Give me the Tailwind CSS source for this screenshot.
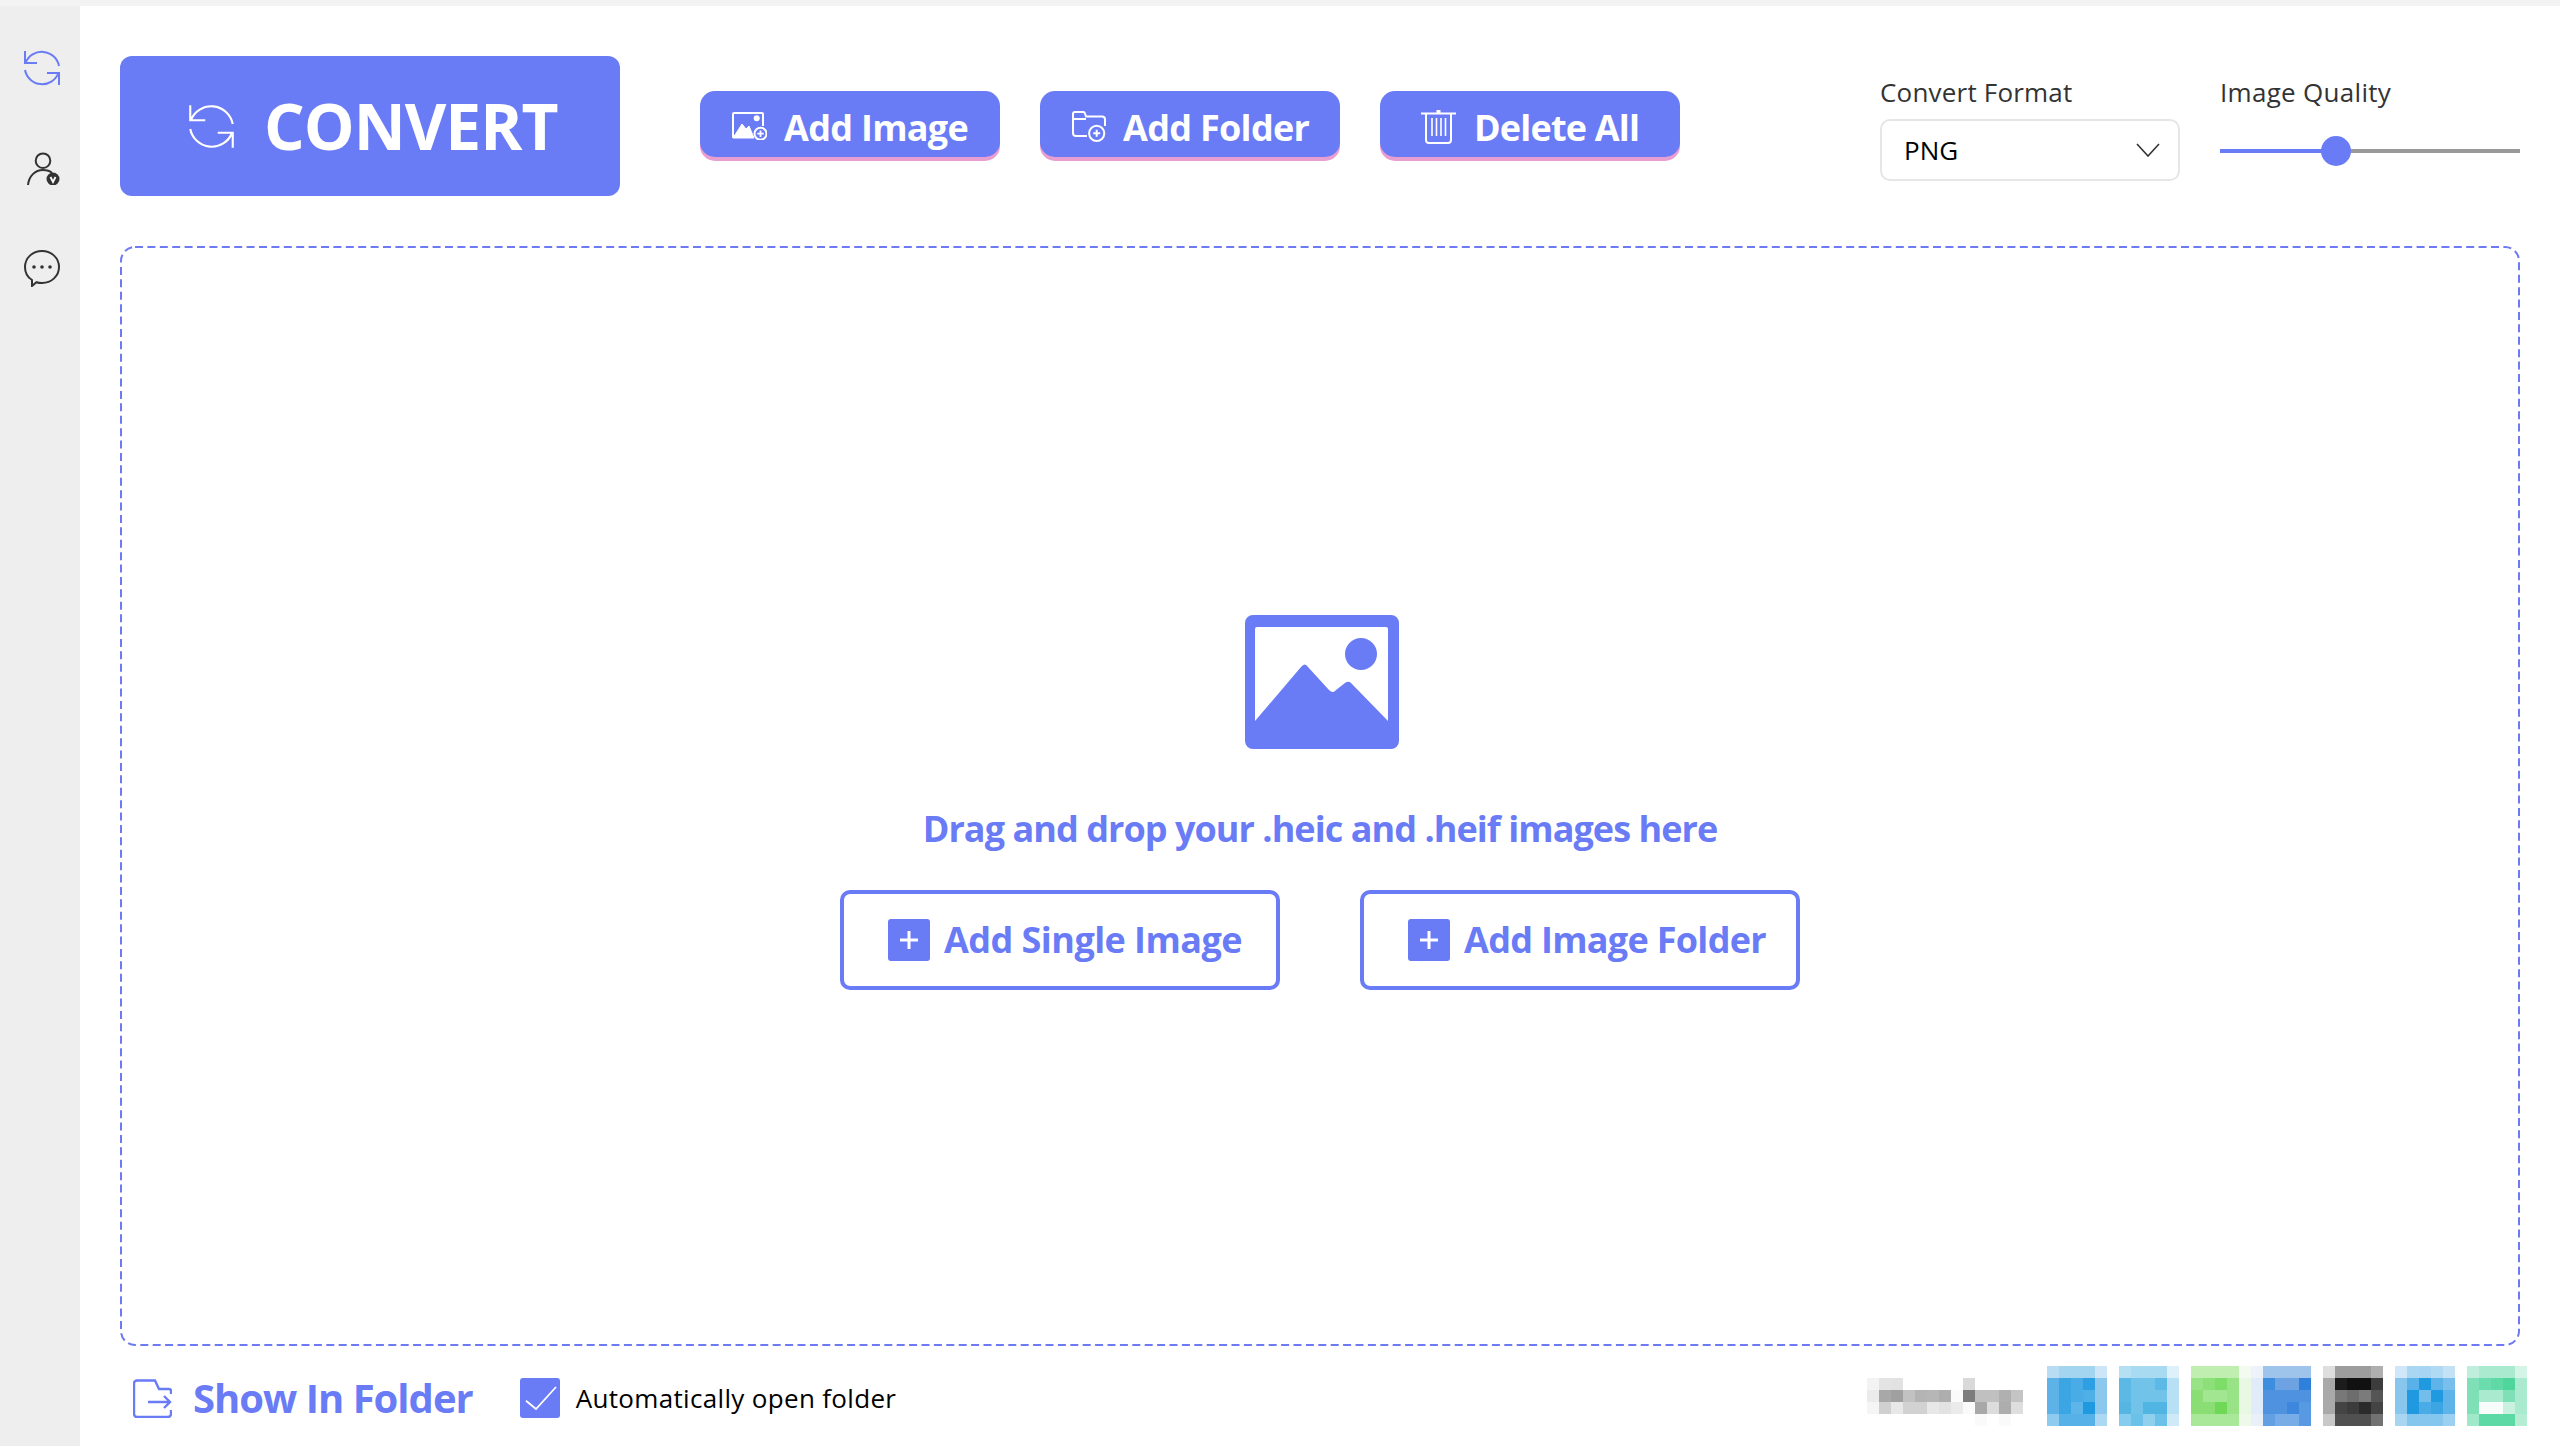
<!DOCTYPE html>
<html lang="en">
<head>
<meta charset="utf-8">
<title>HEIC Converter</title>
<script src="https://cdn.jsdelivr.net/npm/@tailwindcss/browser@4"></script>
</head>
<body class="bg-white font-['Open_Sans','Noto_Sans',sans-serif] text-[#333]">
<div class="flex h-[1446px] w-[2560px] flex-col overflow-hidden">
  <div class="h-[6px] shrink-0 bg-[#f3f3f3]"></div>
  <div class="flex min-h-0 flex-1">
    <!-- sidebar -->
    <aside class="flex w-[80px] shrink-0 flex-col items-center bg-[#eeeeee] pt-[44px]">
      <svg class="ml-[4px] h-[36px] w-[36px]" viewBox="0 0 36 36" fill="none" stroke="#6a7bf6" stroke-width="2"><path d="M1 1V13H13M1.5 13A17.5 17.5 0 0 1 35 16M35 35V23H23M34.5 23A17.5 17.5 0 0 1 1 20"/></svg>
      <svg class="ml-[7px] mt-[66px] h-[33px] w-[33px]" viewBox="0 0 33 33" fill="none" stroke="#333" stroke-width="2"><circle cx="16" cy="8.7" r="7.3"/><path d="M1 33C2 24 8 18 16 18C20 18 23 19 25 21"/><circle cx="26" cy="27" r="6.5" fill="#333" stroke="none"/><path d="M23.5 25L26 30L28.5 25" stroke="#fff" stroke-width="1.8"/></svg>
      <svg class="ml-[3px] mt-[65px] h-[37px] w-[38px]" viewBox="0 0 38 37" fill="none" stroke="#333" stroke-width="2"><path d="M19 1C28.5 1 36 8 36 17C36 26 28.5 33 19 33C17 33 15 32.7 13.5 32.2L9 36L9 30C4 27 2 22 2 17C2 8 9.5 1 19 1Z"/><circle cx="11" cy="17" r="1.8" fill="#333" stroke="none"/><circle cx="19" cy="17" r="1.8" fill="#333" stroke="none"/><circle cx="27" cy="17" r="1.8" fill="#333" stroke="none"/></svg>
    </aside>

    <main class="flex min-w-0 flex-1 flex-col px-[40px] pt-[50px]">
      <!-- header -->
      <div class="flex h-[140px] shrink-0 items-center">
        <button class="flex h-[140px] w-[500px] items-center rounded-[12px] bg-[#6a7bf6] pl-[69px] text-white">
          <svg class="h-[45px] w-[45px]" viewBox="0 0 36 36" fill="none" stroke="#fff" stroke-width="1.7"><path d="M1 1V13H13M1.5 13A17.5 17.5 0 0 1 35 16M35 35V23H23M34.5 23A17.5 17.5 0 0 1 1 20"/></svg>
          <span class="ml-[30px] text-[64px] leading-none font-bold tracking-[-1px]">CONVERT</span>
        </button>
        <div class="ml-[80px] -mt-[4px] flex gap-[40px]">
          <button class="flex h-[66px] w-[300px] items-center rounded-[15px] bg-[#6a7bf6] pl-[32px] pt-[4px] text-white shadow-[0_4px_0_#e89ed0]">
            <svg class="h-[28px] w-[35px]" viewBox="0 0 35 28" fill="none"><path d="M1 26V2a1 1 0 0 1 1-1H30a1 1 0 0 1 1 1V14" stroke="#fff" stroke-width="2"/><path d="M1 26L10 12L14 17L17 14L22 26Z" fill="#fff" stroke="#fff" stroke-width="1"/><circle cx="24.7" cy="6.3" r="3" fill="#fff"/><circle cx="28.5" cy="21.7" r="6" fill="#6a7bf6" stroke="#fff" stroke-width="2"/><path d="M28.5 18.5V25M25.3 21.7H31.7" stroke="#fff" stroke-width="1.8"/></svg>
            <span class="ml-[17px] pt-[4px] text-[36px] leading-none font-bold tracking-[-0.7px]">Add Image</span>
          </button>
          <button class="flex h-[66px] w-[300px] items-center rounded-[15px] bg-[#6a7bf6] pl-[32px] pt-[4px] text-white shadow-[0_4px_0_#e89ed0]">
            <svg class="h-[31px] w-[35px]" viewBox="0 0 35 31" fill="none" stroke="#fff" stroke-width="2"><path d="M15 25H4a3 3 0 0 1-3-3V3a2 2 0 0 1 2-2H11a2 2 0 0 1 2 1.5L14 5.5H30a3 3 0 0 1 3 3V15"/><path d="M1 8H14"/><circle cx="24.7" cy="22.3" r="7.6"/><path d="M24.7 18.8V25.8M21.2 22.3H28.2"/></svg>
            <span class="ml-[16px] pt-[4px] text-[36px] leading-none font-bold tracking-[-0.7px]">Add Folder</span>
          </button>
          <button class="flex h-[66px] w-[300px] items-center rounded-[15px] bg-[#6a7bf6] pl-[41px] pt-[4px] text-white shadow-[0_4px_0_#e89ed0]">
            <svg class="h-[35px] w-[35px]" viewBox="0 0 35 35" fill="none" stroke="#fff" stroke-width="2"><path d="M0 4.5H35" stroke-width="2"/><path d="M15.5 2.5H19.500" stroke-width="3"/><path d="M5 5V31a3 3 0 0 0 3 3H27a3 3 0 0 0 3-3V5"/><path d="M11 9V27M15.500 9V27M20 9V27M24.500 9V27" stroke-width="1.6"/></svg>
            <span class="ml-[18px] pt-[4px] text-[36px] leading-none font-bold tracking-[-0.8px]">Delete All</span>
          </button>
        </div>
        <div class="ml-auto flex gap-[40px] self-start pt-[18px]">
          <div class="w-[300px]">
            <div class="h-[36px] text-[26px] leading-[36px] tracking-[0.2px] text-[#333]">Convert Format</div>
            <div class="mt-[9px] flex h-[62px] items-center justify-between rounded-[10px] border-2 border-[#e6e6e6] pl-[22px] pr-[18px] text-[26px] text-black">
              <span>PNG</span>
              <svg class="h-[14px] w-[24px]" viewBox="0 0 24 14" fill="none" stroke="#333" stroke-width="1.6"><path d="M1 1L12 13L23 1"/></svg>
            </div>
          </div>
          <div class="w-[300px]">
            <div class="h-[36px] text-[26px] leading-[36px] tracking-[0.3px] text-[#333]">Image Quality</div>
            <div class="relative mt-[39px] flex h-[4px]">
              <div class="w-[116px] bg-[#6a7bf6]"></div>
              <div class="flex-1 bg-[#999999]"></div>
              <div class="absolute left-[101px] top-[-13px] size-[30px] rounded-full bg-[#6a7bf6]"></div>
            </div>
          </div>
        </div>
      </div>

      <!-- drop zone -->
      <section class="relative mt-[50px] flex h-[1100px] shrink-0 flex-col items-center pt-[369px]">
        <svg class="absolute inset-0 h-[1100px] w-[2400px]" viewBox="0 0 2400 1100" fill="none"><rect x="1" y="1" width="2398" height="1098" rx="14" stroke="#6e7af2" stroke-width="2" stroke-dasharray="8 4.4"/></svg>
        <svg class="h-[134px] w-[154px] translate-x-[2px] shrink-0" viewBox="0 0 154 134"><path fill="#6a7bf6" fill-rule="evenodd" d="M8 0H146a8 8 0 0 1 8 8V126a8 8 0 0 1-8 8H8a8 8 0 0 1-8-8V8a8 8 0 0 1 8-8ZM12 12a2 2 0 0 0-2 2V106L56 52Q60 47 63 52L84 75Q88 79 91 75L100 68Q104 65 107 69L143 106V14a2 2 0 0 0-2-2Z"/><circle cx="116" cy="39" r="16" fill="#6a7bf6"/></svg>
        <h2 class="mt-[56px] text-[36px] leading-[48px] font-bold tracking-[-0.95px] text-[#6a7bf6]">Drag and drop your .heic and .heif images here</h2>
        <div class="mt-[37px] flex gap-[80px]">
          <button class="flex h-[100px] w-[440px] items-center rounded-[10px] border-4 border-[#6a7bf6] pl-[44px] text-[#6a7bf6]">
            <span class="flex size-[42px] shrink-0 items-center justify-center rounded-[3px] bg-[#6a7bf6]"><svg class="size-[24px]" viewBox="0 0 24 24" stroke="#fff" stroke-width="3"><path d="M12 3V21M3 12H21"/></svg></span>
            <span class="ml-[14px] text-[36px] leading-none font-bold tracking-[-0.55px]">Add Single Image</span>
          </button>
          <button class="flex h-[100px] w-[440px] items-center rounded-[10px] border-4 border-[#6a7bf6] pl-[44px] text-[#6a7bf6]">
            <span class="flex size-[42px] shrink-0 items-center justify-center rounded-[3px] bg-[#6a7bf6]"><svg class="size-[24px]" viewBox="0 0 24 24" stroke="#fff" stroke-width="3"><path d="M12 3V21M3 12H21"/></svg></span>
            <span class="ml-[14px] text-[36px] leading-none font-bold tracking-[-0.7px]">Add Image Folder</span>
          </button>
        </div>
      </section>

      <!-- footer -->
      <footer class="flex h-[100px] shrink-0 items-center">
        <div class="ml-[13px] mt-[4px] flex items-center">
          <svg class="h-[39px] w-[39px]" viewBox="0 0 39 39" fill="none" stroke="#6a7bf6" stroke-width="2.4"><path d="M38 15V12a2 2 0 0 0-2-2H26L22 1.500H4a3 3 0 0 0-3 3V35a3 3 0 0 0 3 3H35a3 3 0 0 0 3-3V31M15 23H37M31 17L37 23L31 29"/></svg>
          <span class="ml-[21px] text-[40px] leading-none font-bold tracking-[-1px] text-[#6a7bf6]">Show In Folder</span>
          <span class="ml-[47px] flex size-[40px] items-center justify-center rounded-[3px] bg-[#6a7bf6]"><svg class="size-[40px]" viewBox="0 0 40 40" fill="none" stroke="#fff" stroke-width="1.8"><path d="M6 22.700L16 31L36 9"/></svg></span>
          <span class="ml-[16px] text-[26px] leading-none tracking-[0.33px] text-black">Automatically open folder</span>
        </div>
        <div class="-mr-[7px] ml-auto flex items-end gap-[12px]">
          <div class="mr-[12px] grid h-[48px] w-[156px] grid-cols-13 grid-rows-4 blur-[0.6px]">
            <i class="bg-[#f3f3f3]"></i><i class="bg-[#e4e4e4]"></i><i class="bg-[#e2e2e2]"></i><i></i><i></i><i></i><i></i><i></i><i class="bg-[#d9d9d9]"></i><i></i><i></i><i></i><i></i>
            <i class="bg-[#ebebeb]"></i><i class="bg-[#a8a8a8]"></i><i class="bg-[#a0a0a0]"></i><i class="bg-[#c2c2c2]"></i><i class="bg-[#b4b4b4]"></i><i class="bg-[#b6b6b6]"></i><i class="bg-[#aeaeae]"></i><i class="bg-[#fafafa]"></i><i class="bg-[#7d7d7d]"></i><i class="bg-[#c0c0c0]"></i><i class="bg-[#c0c0c0]"></i><i class="bg-[#b0b0b0]"></i><i class="bg-[#c4c4c4]"></i>
            <i class="bg-[#f5f5f5]"></i><i class="bg-[#d0d0d0]"></i><i class="bg-[#e8e8e8]"></i><i class="bg-[#d2d2d2]"></i><i class="bg-[#d2d2d2]"></i><i class="bg-[#e8e8e8]"></i><i class="bg-[#e2e2e2]"></i><i class="bg-[#ebebeb]"></i><i class="bg-[#fafafa]"></i><i class="bg-[#a8a8a8]"></i><i class="bg-[#dcdcdc]"></i><i class="bg-[#adadad]"></i><i class="bg-[#dedede]"></i>
            <i></i><i></i><i></i><i></i><i></i><i></i><i></i><i></i><i></i><i class="bg-[#fafafa]"></i><i></i><i class="bg-[#fafafa]"></i><i></i>
          </div>
          <div class="grid size-[60px] grid-cols-5 grid-rows-5 blur-[0.6px]">
            <i class="bg-[#b8dcf3]"></i><i class="bg-[#a3d5f1]"></i><i class="bg-[#a3d5f1]"></i><i class="bg-[#a3d5f1]"></i><i class="bg-[#cde6f7]"></i>
            <i class="bg-[#5db3e8]"></i><i class="bg-[#3ca5e4]"></i><i class="bg-[#4aace6]"></i><i class="bg-[#2d9fe2]"></i><i class="bg-[#8cc8ee]"></i>
            <i class="bg-[#5db3e8]"></i><i class="bg-[#3ca5e4]"></i><i class="bg-[#4aace6]"></i><i class="bg-[#4fb0e7]"></i><i class="bg-[#8cc8ee]"></i>
            <i class="bg-[#5db3e8]"></i><i class="bg-[#3ca5e4]"></i><i class="bg-[#5eb5e9]"></i><i class="bg-[#1f99e0]"></i><i class="bg-[#8cc8ee]"></i>
            <i class="bg-[#8fcaef]"></i><i class="bg-[#55b1e8]"></i><i class="bg-[#55b1e8]"></i><i class="bg-[#55b1e8]"></i><i class="bg-[#acd8f3]"></i>
          </div>
          <div class="grid size-[60px] grid-cols-5 grid-rows-5 blur-[0.6px]">
            <i class="bg-[#b5dff3]"></i><i class="bg-[#a8daf2]"></i><i class="bg-[#a8daf2]"></i><i class="bg-[#a8daf2]"></i><i class="bg-[#def0fa]"></i>
            <i class="bg-[#5cb8e4]"></i><i class="bg-[#72c3ea]"></i><i class="bg-[#72c3ea]"></i><i class="bg-[#5cb8e4]"></i><i class="bg-[#b8e0f4]"></i>
            <i class="bg-[#5cb8e4]"></i><i class="bg-[#72c3ea]"></i><i class="bg-[#72c3ea]"></i><i class="bg-[#72c3ea]"></i><i class="bg-[#b8e0f4]"></i>
            <i class="bg-[#55b5e3]"></i><i class="bg-[#72c3ea]"></i><i class="bg-[#50b5e3]"></i><i class="bg-[#50b5e3]"></i><i class="bg-[#b8e0f4]"></i>
            <i class="bg-[#85ccee]"></i><i class="bg-[#6cc1e9]"></i><i class="bg-[#90d0ef]"></i><i class="bg-[#6cc1e9]"></i><i class="bg-[#cfe9f7]"></i>
          </div>
          <div class="grid h-[60px] w-[120px] grid-cols-10 grid-rows-5 blur-[0.6px]">
            <i class="bg-[#c0edb0]"></i><i class="bg-[#c0edb0]"></i><i class="bg-[#c0edb0]"></i><i class="bg-[#c0edb0]"></i><i class="bg-[#f3fbf0]"></i><i class="bg-[#edf3fb]"></i><i class="bg-[#9fc4ec]"></i><i class="bg-[#9fc4ec]"></i><i class="bg-[#9fc4ec]"></i><i class="bg-[#9fc4ec]"></i>
            <i class="bg-[#98e385]"></i><i class="bg-[#8de078]"></i><i class="bg-[#7edc68]"></i><i class="bg-[#98e385]"></i><i class="bg-[#e8f8e3]"></i><i class="bg-[#e0ecf9]"></i><i class="bg-[#3d8ede]"></i><i class="bg-[#6da3e2]"></i><i class="bg-[#6da3e2]"></i><i class="bg-[#2f80da]"></i>
            <i class="bg-[#8ade74]"></i><i class="bg-[#a3e692]"></i><i class="bg-[#a3e692]"></i><i class="bg-[#98e385]"></i><i class="bg-[#e8f8e3]"></i><i class="bg-[#e0ecf9]"></i><i class="bg-[#4f93e0]"></i><i class="bg-[#4f93e0]"></i><i class="bg-[#4f93e0]"></i><i class="bg-[#4f93e0]"></i>
            <i class="bg-[#8ade74]"></i><i class="bg-[#8ade74]"></i><i class="bg-[#6fd857]"></i><i class="bg-[#98e385]"></i><i class="bg-[#e8f8e3]"></i><i class="bg-[#e0ecf9]"></i><i class="bg-[#4f93e0]"></i><i class="bg-[#4f93e0]"></i><i class="bg-[#3d88dd]"></i><i class="bg-[#569ae1]"></i>
            <i class="bg-[#aae899]"></i><i class="bg-[#aae899]"></i><i class="bg-[#aae899]"></i><i class="bg-[#aae899]"></i><i class="bg-[#eef9ea]"></i><i class="bg-[#e8f0fa]"></i><i class="bg-[#629fe3]"></i><i class="bg-[#78ace7]"></i><i class="bg-[#78ace7]"></i><i class="bg-[#5998e2]"></i>
          </div>
          <div class="grid size-[60px] grid-cols-5 grid-rows-5 blur-[0.6px]">
            <i class="bg-[#dedede]"></i><i class="bg-[#9d9d9d]"></i><i class="bg-[#9d9d9d]"></i><i class="bg-[#9d9d9d]"></i><i class="bg-[#afafaf]"></i>
            <i class="bg-[#a9a9a9]"></i><i class="bg-[#1c1c1c]"></i><i class="bg-[#111111]"></i><i class="bg-[#111111]"></i><i class="bg-[#3c3c3c]"></i>
            <i class="bg-[#a9a9a9]"></i><i class="bg-[#787878]"></i><i class="bg-[#6d6d6d]"></i><i class="bg-[#7b7b7b]"></i><i class="bg-[#555555]"></i>
            <i class="bg-[#a9a9a9]"></i><i class="bg-[#444444]"></i><i class="bg-[#3c3c3c]"></i><i class="bg-[#2b2b2b]"></i><i class="bg-[#444444]"></i>
            <i class="bg-[#c8c8c8]"></i><i class="bg-[#505050]"></i><i class="bg-[#505050]"></i><i class="bg-[#505050]"></i><i class="bg-[#727272]"></i>
          </div>
          <div class="grid size-[60px] grid-cols-5 grid-rows-5 blur-[0.6px]">
            <i class="bg-[#cfe7f8]"></i><i class="bg-[#a9d7f3]"></i><i class="bg-[#a5d5f2]"></i><i class="bg-[#b0daf3]"></i><i class="bg-[#c3e2f6]"></i>
            <i class="bg-[#88c6ed]"></i><i class="bg-[#58b1e8]"></i><i class="bg-[#1f99e0]"></i><i class="bg-[#5eb4e9]"></i><i class="bg-[#78bfeb]"></i>
            <i class="bg-[#88c6ed]"></i><i class="bg-[#1f99e0]"></i><i class="bg-[#72bde9]"></i><i class="bg-[#1f99e0]"></i><i class="bg-[#5eb4e9]"></i>
            <i class="bg-[#88c6ed]"></i><i class="bg-[#1f99e0]"></i><i class="bg-[#4aace6]"></i><i class="bg-[#3ca5e4]"></i><i class="bg-[#5eb4e9]"></i>
            <i class="bg-[#a8d6f2]"></i><i class="bg-[#84c6ee]"></i><i class="bg-[#84c6ee]"></i><i class="bg-[#84c6ee]"></i><i class="bg-[#9cd0f1]"></i>
          </div>
          <div class="grid size-[60px] grid-cols-5 grid-rows-5 blur-[0.6px]">
            <i class="bg-[#c0eedd]"></i><i class="bg-[#aaeacf]"></i><i class="bg-[#aaeacf]"></i><i class="bg-[#aaeacf]"></i><i class="bg-[#d5f4e8]"></i>
            <i class="bg-[#7fe0b8]"></i><i class="bg-[#6bdcad]"></i><i class="bg-[#5fd9a6]"></i><i class="bg-[#50d59d]"></i><i class="bg-[#aaeacf]"></i>
            <i class="bg-[#7fe0b8]"></i><i class="bg-[#aaeacf]"></i><i class="bg-[#aaeacf]"></i><i class="bg-[#7fe0b8]"></i><i class="bg-[#aaeacf]"></i>
            <i class="bg-[#7fe0b8]"></i><i class="bg-[#f8fdfb]"></i><i class="bg-[#f8fdfb]"></i><i class="bg-[#c8f1e0]"></i><i class="bg-[#aaeacf]"></i>
            <i class="bg-[#9fe8c9]"></i><i class="bg-[#5dd9a5]"></i><i class="bg-[#5dd9a5]"></i><i class="bg-[#5dd9a5]"></i><i class="bg-[#b4edd4]"></i>
          </div>
        </div>
      </footer>
    </main>
  </div>
</div>
</body>
</html>
